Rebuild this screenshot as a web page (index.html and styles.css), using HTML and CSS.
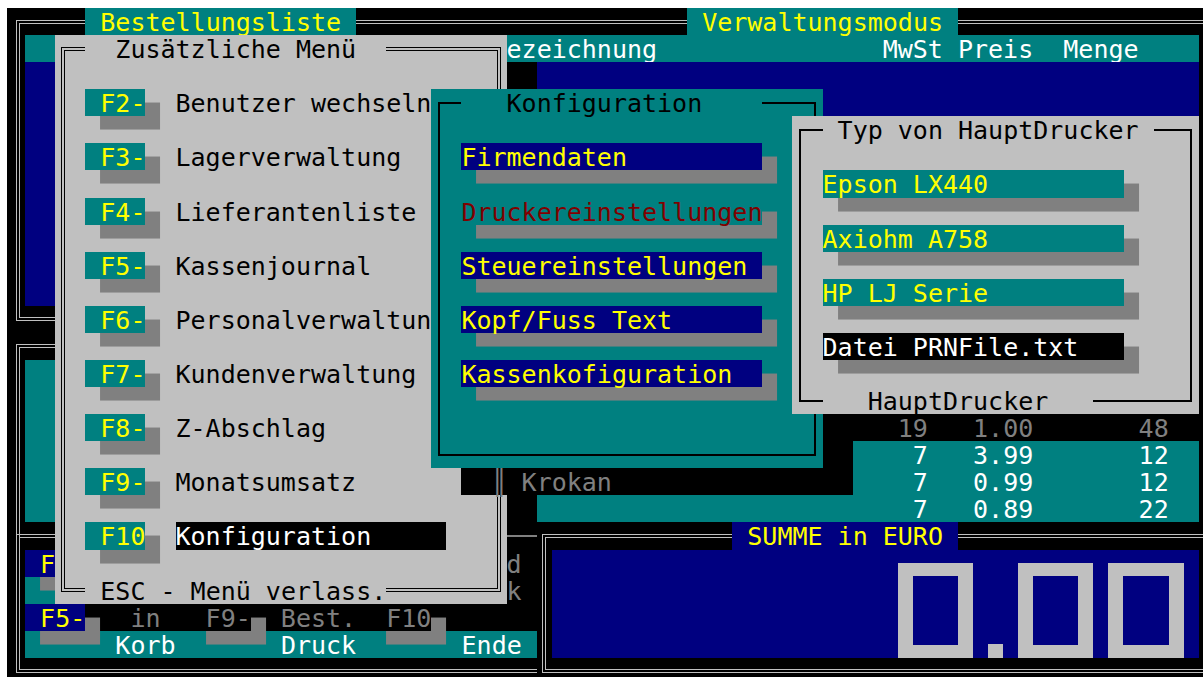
FILE: index.html
```html
<!DOCTYPE html>
<html lang="de">
<head>
<meta charset="utf-8">
<title>Kasse – Verwaltungsmodus</title>
<link rel="stylesheet" href="styles.css">
</head>
<body>
<div class="screen">

  <!-- order list panel -->
  <div class="frame-dbl f-orders"></div>
  <div class="orders-head">
    <span class="h-name">ezeichnung</span>
    <span class="h-vat">MwSt</span>
    <span class="h-price">Preis</span>
    <span class="h-qty">Menge</span>
  </div>
  <div class="orders-list"></div>
  <div class="tab tab-orders"> Bestellungsliste </div>
  <div class="tab tab-mode"> Verwaltungsmodus </div>

  <!-- article panel -->
  <div class="frame-dbl f-items"></div>
  <div class="items-body"></div>
  <div class="item-line line-16">      7   3.99       12</div>
  <div class="item-line line-17">      7   0.99       12</div>
  <div class="item-line line-18">      7   0.89       22</div>

  <!-- function key panel -->
  <div class="frame-dbl f-keys"></div>
  <div class="keys">
    <div class="keys-band band-1"></div>
    <div class="keys-band band-3">      Korb       Druck       Ende </div>
    <div class="key key-f2"> F2-</div>
    <div class="key key-f5"> F5-</div>
    <div class="klabel kl-in">in</div>
    <div class="key key-off key-f9"> F9-</div>
    <div class="klabel kl-best">Best.</div>
    <div class="key key-off key-f10"> F10</div>
  </div>

  <!-- total panel -->
  <div class="frame-dbl f-total"></div>
  <div class="total-body"></div>
  <div class="tab tab-total"> SUMME in EURO </div>
  <div class="digit digit-1"></div>
  <div class="dot"></div>
  <div class="digit digit-2"></div>
  <div class="digit digit-3"></div>

  <!-- shadow of the extra menu -->
  <div class="shade sh-menu">
    <div class="sh-line"></div>
    <div class="sh-d">d</div>
    <div class="sh-k">k</div>
  </div>

  <!-- extra menu window -->
  <div class="win menu">
    <div class="win-frame dbl"></div>
    <div class="menu-title">  Zusätzliche Menü  </div>
    <ul class="menu-list">
      <li><span class="fkey"> F2-</span><span class="mlabel">Benutzer wechseln</span></li>
      <li><span class="fkey"> F3-</span><span class="mlabel">Lagerverwaltung</span></li>
      <li><span class="fkey"> F4-</span><span class="mlabel">Lieferantenliste</span></li>
      <li><span class="fkey"> F5-</span><span class="mlabel">Kassenjournal</span></li>
      <li><span class="fkey"> F6-</span><span class="mlabel">Personalverwaltung</span></li>
      <li><span class="fkey"> F7-</span><span class="mlabel">Kundenverwaltung</span></li>
      <li><span class="fkey"> F8-</span><span class="mlabel">Z-Abschlag</span></li>
      <li><span class="fkey"> F9-</span><span class="mlabel">Monatsumsatz</span></li>
      <li><span class="fkey"> F10</span><span class="mlabel sel">Konfiguration</span></li>
    </ul>
    <div class="menu-foot"> ESC - Menü verlass.</div>
  </div>

  <!-- configuration window -->
  <div class="shade sh-cfg-r"></div>
  <div class="shade sh-cfg-b">  ║ Krokan</div>
  <div class="win cfg">
    <div class="win-frame sgl"></div>
    <div class="cfg-title">   Konfiguration    </div>
    <ul class="bar-list cfg-list">
      <li class="bar">Firmendaten</li>
      <li class="bar bar-off">Druckereinstellungen</li>
      <li class="bar">Steuereinstellungen</li>
      <li class="bar">Kopf/Fuss Text</li>
      <li class="bar">Kassenkofiguration</li>
    </ul>
  </div>

  <!-- printer type window -->
  <div class="shade sh-prn-r"></div>
  <div class="shade sh-prn-b">     19   1.00       48</div>
  <div class="win prn">
    <div class="win-frame sgl"></div>
    <div class="prn-title"> Typ von HauptDrucker </div>
    <ul class="bar-list prn-list">
      <li class="bar bar-teal">Epson LX440</li>
      <li class="bar bar-teal">Axiohm A758</li>
      <li class="bar bar-teal">HP LJ Serie</li>
      <li class="bar bar-pick">Datei PRNFile.txt</li>
    </ul>
    <div class="prn-foot">   HauptDrucker   </div>
  </div>

</div>
</body>
</html>
```
FILE: styles.css
```css
/* 80x25 text screen: cell 15.05 x 27.08 px */
html, body {
  margin: 0;
  overflow: hidden;
  background: #fff;
}

*, *::before, *::after { box-sizing: border-box; }

.screen {
  margin: 8px 0 0 7px;
  padding-left: 3px;
  width: 1196px;
  height: 669px;
  overflow: hidden;
  background: #000;
  display: grid;
  grid-template-columns: repeat(80, 15.05px);
  grid-template-rows: repeat(25, 27.08px);
  grid-auto-columns: 15.05px;
  font-family: "DejaVu Sans Mono", monospace;
  font-size: 25px;
  line-height: 30px;
  white-space: pre;
  color: #c0c0c0;
}

ul { margin: 0; padding: 0; list-style: none; }

/* frames drawn through the middle of the border cells */
.frame-dbl {
  margin: 11.54px 5.525px;
  border: 4px double #c0c0c0;
}

/* ---- order list ---- */
.f-orders { grid-area: 1 / 1 / 13 / 81; }
.orders-head {
  grid-area: 2 / 2 / 3 / 80;
  display: grid;
  grid-template-columns: repeat(78, 15.05px);
  background: #008080;
  color: #fff;
}
.h-name { grid-column: 33 / 43; }
.h-vat { grid-column: 58 / 62; }
.h-price { grid-column: 63 / 68; }
.h-qty { grid-column: 70 / 75; }
.orders-list { grid-area: 3 / 2 / 12 / 80; background: #000080; }

.tab { background: #008080; color: #ff0; }
.tab-orders { grid-area: 1 / 6 / 2 / 24; }
.tab-mode { grid-area: 1 / 46 / 2 / 64; }

/* ---- article panel ---- */
.f-items {
  grid-area: 13 / 1 / 21 / 81;
  border-bottom: 0;
  margin-bottom: 0;
}
.items-body { grid-area: 14 / 2 / 20 / 80; background: #008080; }
.item-line { color: #fff; }
.line-16 { grid-area: 17 / 55 / 18 / 80; }
.line-17 { grid-area: 18 / 55 / 19 / 80; }
.line-18 { grid-area: 19 / 55 / 20 / 80; }

/* ---- function keys ---- */
.f-keys {
  grid-area: 20 / 1 / 26 / 36;
  border-right: 0;
  margin-right: 0;
}
.keys {
  grid-area: 21 / 2 / 25 / 36;
  display: grid;
  grid-template-columns: repeat(34, 15.05px);
  grid-template-rows: repeat(4, 27.08px);
}
.keys-band { background: #008080; color: #fff; }
.band-1 { grid-area: 2 / 1 / 3 / 35; }
.band-3 { grid-area: 4 / 1 / 5 / 35; }
.klabel { color: #808080; }
.kl-in { grid-area: 3 / 8 / 4 / 10; }
.kl-best { grid-area: 3 / 18 / 4 / 23; }

.key {
  background: #000080;
  color: #ff0;
  box-shadow: 15.05px 13.54px 0 #808080;
}
.key-off { background: #000; color: #808080; }
.key-f2 { grid-area: 1 / 1 / 2 / 5; }
.key-f5 { grid-area: 3 / 1 / 4 / 5; }
.key-f9 { grid-area: 3 / 12 / 4 / 16; }
.key-f10 { grid-area: 3 / 24 / 4 / 28; }

/* ---- total ---- */
.f-total { grid-area: 20 / 36 / 26 / 81; }
.total-body { grid-area: 21 / 37 / 25 / 80; background: #000080; }
.tab-total { grid-area: 20 / 49 / 21 / 64; background: #000080; }

.digit {
  margin-top: 13.54px;
  border: solid #c0c0c0;
  border-width: 13.54px 15.05px;
}
.digit-1 { grid-area: 21 / 60 / 25 / 65; }
.digit-2 { grid-area: 21 / 68 / 25 / 73; }
.digit-3 { grid-area: 21 / 74 / 25 / 79; }
.dot { grid-area: 24 / 66 / 25 / 67; margin-top: 13.54px; background: #c0c0c0; }

/* ---- window shadows ---- */
.shade { background: #000; color: #808080; }

.sh-menu {
  grid-area: 3 / 34 / 24 / 36;
  display: grid;
  grid-template-columns: repeat(2, 15.05px);
  grid-template-rows: repeat(21, 27.08px);
}
.sh-line { grid-area: 18 / 1 / 19 / 3; margin-top: 12.5px; border-top: 2px solid #808080; }
.sh-d { grid-area: 19 / 1 / 20 / 2; }
.sh-k { grid-area: 20 / 1 / 21 / 2; }

.sh-cfg-r { grid-area: 5 / 55 / 19 / 57; }
.sh-cfg-b { grid-area: 18 / 31 / 19 / 57; }
.sh-prn-r { grid-area: 6 / 80 / 17 / 82; }
.sh-prn-b { grid-area: 16 / 55 / 17 / 82; }

/* ---- windows ---- */
.win {
  display: grid;
  grid-auto-columns: 15.05px;
  grid-auto-rows: 27.08px;
  color: #000;
}
.win-frame { grid-row: 1 / -1; grid-column: 1 / -1; }
.win-frame.dbl { margin: 11.54px 5.525px; border: 4px double #000; }
.win-frame.sgl { margin: 12.54px 6.525px; border: 2px solid #000; }

/* extra menu */
.menu {
  grid-area: 2 / 4 / 23 / 34;
  background: #c0c0c0;
  grid-template-columns: repeat(30, 15.05px);
  grid-template-rows: repeat(21, 27.08px);
}
.menu-title, .menu-foot { background: #c0c0c0; }
.menu-title { grid-area: 1 / 3 / 2 / 23; }
.menu-foot { grid-area: 21 / 3 / 22 / 23; }

.menu-list {
  grid-area: 3 / 3 / 20 / 31;
  display: flex;
  flex-direction: column;
  gap: 27.08px;
}
.menu-list li { display: flex; height: 27.08px; }
.fkey {
  flex: none;
  width: 60.2px;
  background: #008080;
  color: #ff0;
  box-shadow: 15.05px 13.54px 0 #808080;
}
.mlabel { margin-left: 30.1px; }
.mlabel.sel { width: 270.9px; background: #000; color: #fff; }

/* option bars with half-cell shadow */
.bar-list {
  display: flex;
  flex-direction: column;
  gap: 27.08px;
}
.bar {
  width: 301px;
  height: 27.08px;
  background: #000080;
  color: #ff0;
  box-shadow: 15.05px 13.54px 0 #808080;
}
.bar-off { background: #008080; color: #800000; }
.bar-teal { background: #008080; }
.bar-pick { background: #000; color: #fff; }

/* configuration */
.cfg {
  grid-area: 4 / 29 / 18 / 55;
  background: #008080;
  grid-template-columns: repeat(26, 15.05px);
  grid-template-rows: repeat(14, 27.08px);
}
.cfg-title { grid-area: 1 / 3 / 2 / 23; background: #008080; }
.cfg-list { grid-area: 3 / 3 / 13 / 24; }

/* printer type */
.prn {
  grid-area: 5 / 53 / 16 / 80;
  background: #c0c0c0;
  grid-template-columns: repeat(27, 15.05px);
  grid-template-rows: repeat(11, 27.08px);
}
.prn-title { grid-area: 1 / 3 / 2 / 25; background: #c0c0c0; }
.prn-foot { grid-area: 11 / 3 / 12 / 21; background: #c0c0c0; }
.prn-list { grid-area: 3 / 3 / 11 / 25; }
```
